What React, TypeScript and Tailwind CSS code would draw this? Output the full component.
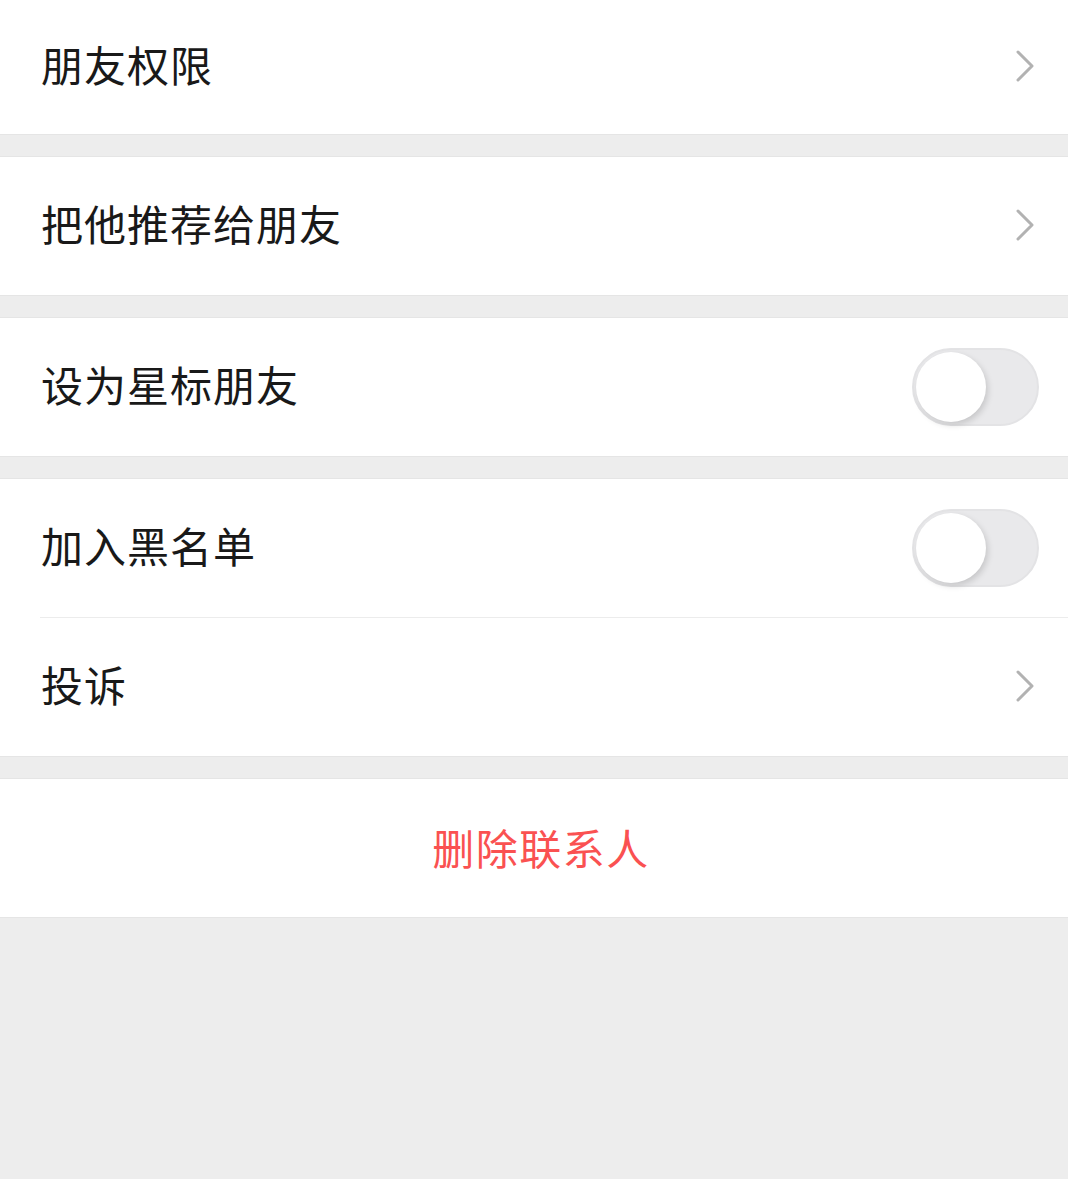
import React, { useState } from 'react';

const font = { fontFamily: '"Noto Sans CJK SC", "Noto Sans", sans-serif' };

const Chevron: React.FC = () => (
    <svg width="20" height="34" viewBox="0 0 20 34" fill="none" className="mr-[33px] -mt-[2px]">
        <polyline points="3,3 17,17 3,31" stroke="#b2b2b2" strokeWidth="3" strokeLinecap="round" strokeLinejoin="round" />
    </svg>
);

const Toggle: React.FC<{ on: boolean; onChange: () => void }> = ({ on, onChange }) => (
    <button
        onClick={onChange}
        className={`mr-[29px] relative w-[127px] h-[78px] rounded-full border-[2px] border-[#e3e3e5] transition-colors ${on ? 'bg-[#07c160]' : 'bg-[#e9e9eb]'}`}
    >
        <span
            className={`absolute top-[2px] w-[70px] h-[70px] rounded-full bg-white shadow-[2px_3px_6px_rgba(0,0,0,0.15)] transition-all ${on ? 'left-[51px]' : 'left-[2px]'}`}
        />
    </button>
);

const Row: React.FC<{ label: string; h?: string; children?: React.ReactNode }> = ({ label, h = 'h-[138px]', children }) => (
    <div className={`${h} flex items-center justify-between pl-[41px]`}>
        <span className="pb-[6px] text-[42px] leading-none text-[#191919] tracking-[1px]">{label}</span>
        {children}
    </div>
);

const App: React.FC = () => {
    const [star, setStar] = useState(false);
    const [block, setBlock] = useState(false);

    return (
        <div className="min-h-[1179px] bg-[#ededed]" style={font}>
            <div className="bg-white border-b border-[#e5e5e5]">
                <Row label="朋友权限" h="h-[134px]">
                    <Chevron />
                </Row>
            </div>

            <div className="mt-[21px] bg-white border-y border-[#e5e5e5]">
                <Row label="把他推荐给朋友">
                    <Chevron />
                </Row>
            </div>

            <div className="mt-[21px] bg-white border-y border-[#e5e5e5]">
                <Row label="设为星标朋友">
                    <Toggle on={star} onChange={() => setStar(!star)} />
                </Row>
            </div>

            <div className="mt-[21px] bg-white border-y border-[#e5e5e5]">
                <Row label="加入黑名单">
                    <Toggle on={block} onChange={() => setBlock(!block)} />
                </Row>
                <div className="ml-[40px] h-px bg-[#ececec]" />
                <Row label="投诉">
                    <Chevron />
                </Row>
            </div>

            <div className="mt-[21px] bg-white border-y border-[#e5e5e5] h-[140px] flex items-center justify-center">
                <button className="pl-[14px] pb-[2px] text-[42px] leading-none text-[#fa5151] tracking-[1.5px]">删除联系人</button>
            </div>
        </div>
    );
};

export default App;
